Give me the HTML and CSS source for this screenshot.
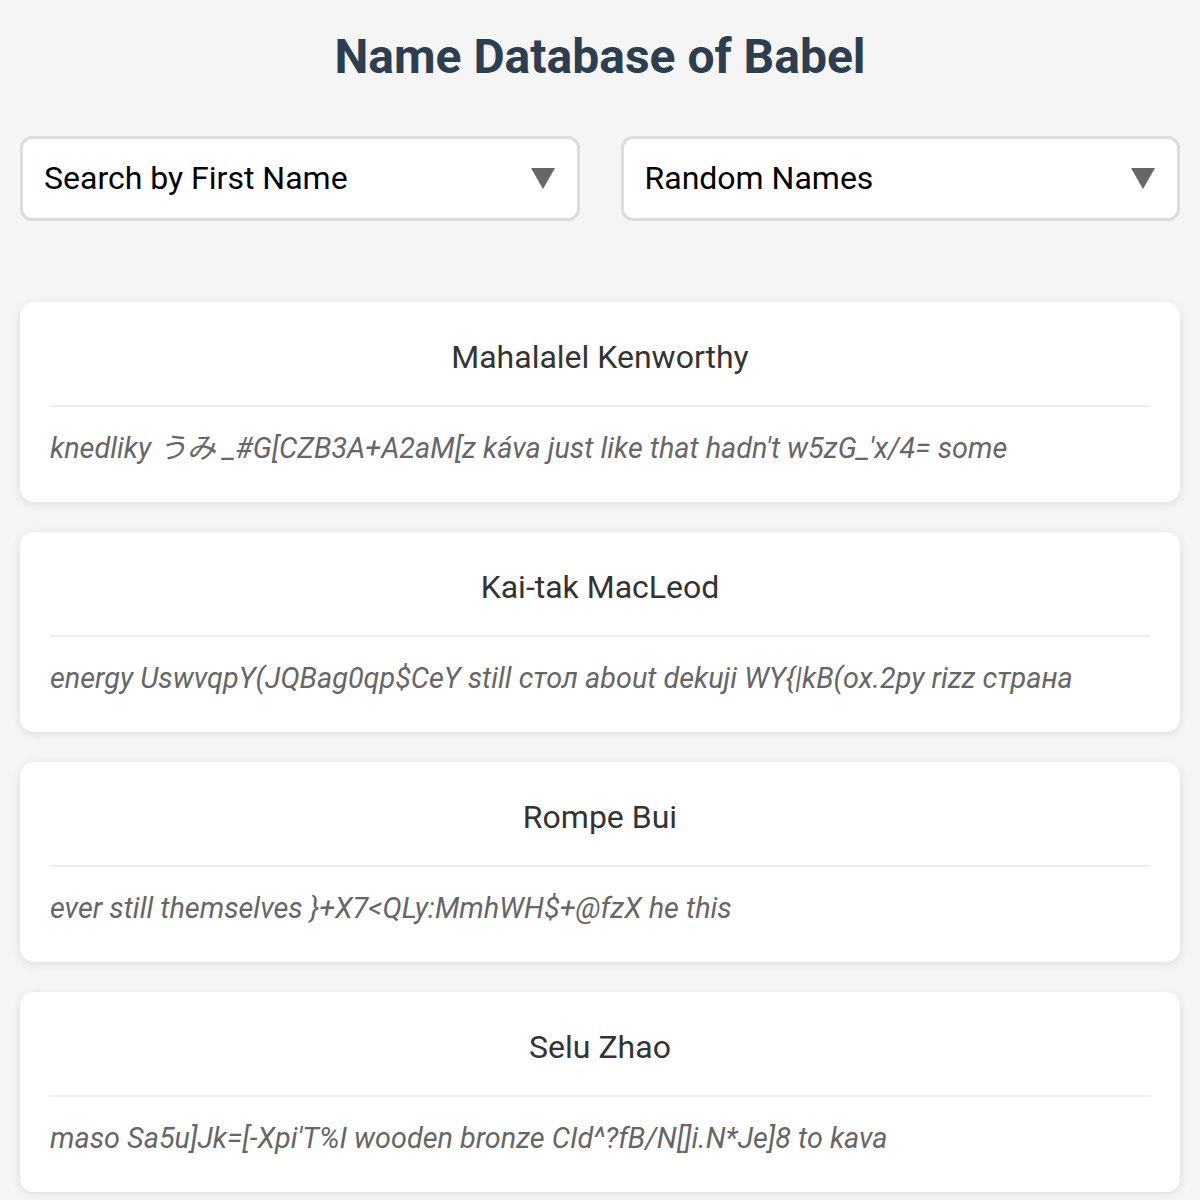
FILE: index.html
```html
<!DOCTYPE html>
<html>
	<head>
		<meta charset="UTF-8">
		<title>Name Database of Babel</title>
		<link rel="stylesheet" href="styles.css">
	</head>
	<body>
		<h1 class="title">Name Database of Babel</h1>
		<div class="filters">
			<div class="select">
				<span>Search by First Name</span>
				<svg class="arrow" width="24" height="21" viewBox="0 0 24 21"><path d="M0 0 H24 L12 21 Z" fill="#666"/></svg>
			</div>
			<div class="select">
				<span>Random Names</span>
				<svg class="arrow" width="24" height="21" viewBox="0 0 24 21"><path d="M0 0 H24 L12 21 Z" fill="#666"/></svg>
			</div>
		</div>
		<div class="list">
			<div class="card">
				<div class="name">Mahalalel Kenworthy</div>
				<div class="desc">knedliky うみ _#G[CZB3A+A2aM[z káva just like that hadn't w5zG_'x/4= some</div>
			</div>
			<div class="card">
				<div class="name">Kai-tak MacLeod</div>
				<div class="desc">energy UswvqpY(JQBag0qp$CeY still стол about dekuji WY{|kB(ox.2py rizz страна</div>
			</div>
			<div class="card">
				<div class="name">Rompe Bui</div>
				<div class="desc">ever still themselves }+X7&lt;QLy:MmhWH$+@fzX he this</div>
			</div>
			<div class="card">
				<div class="name">Selu Zhao</div>
				<div class="desc">maso Sa5u]Jk=[-Xpi'T%I wooden bronze CId^?fB/N[]i.N*Je]8 to kava</div>
			</div>
		</div>
	</body>
</html>
```
FILE: styles.css
```css
* {
	margin: 0;
	padding: 0;
	box-sizing: border-box;
}

body {
	background-color: #f5f5f5;
	font-family: Roboto, "Noto Sans CJK JP", sans-serif;
	padding: 29px 20px 20px;
}

.title {
	font-size: 48px;
	font-weight: bold;
	line-height: 56px;
	color: #2c3e50;
	text-align: center;
}

.filters {
	display: flex;
	gap: 41px;
	margin-top: 51px;
}

.select {
	flex: 1;
	display: flex;
	align-items: center;
	justify-content: space-between;
	background: #fff;
	border: 3px solid #ddd;
	border-radius: 12px;
	padding: 21px 22px 21px 21px;
	font-size: 32px;
	line-height: 37px;
	color: #000;
}

.arrow {
	display: block;
}

.list {
	display: flex;
	flex-direction: column;
	gap: 30px;
	margin-top: 81px;
}

.card {
	background: #fff;
	border-radius: 14px;
	padding: 30px 30px 34px;
	box-shadow: 0 2px 10px rgba(0, 0, 0, 0.1);
}

.name {
	font-size: 32px;
	line-height: 50px;
	color: #333;
	text-align: center;
	padding-bottom: 23px;
	border-bottom: 2px solid #eee;
}

.desc {
	font-size: 28.8px;
	font-style: italic;
	line-height: 40px;
	color: #666;
	margin-top: 21px;
	white-space: nowrap;
}
```
